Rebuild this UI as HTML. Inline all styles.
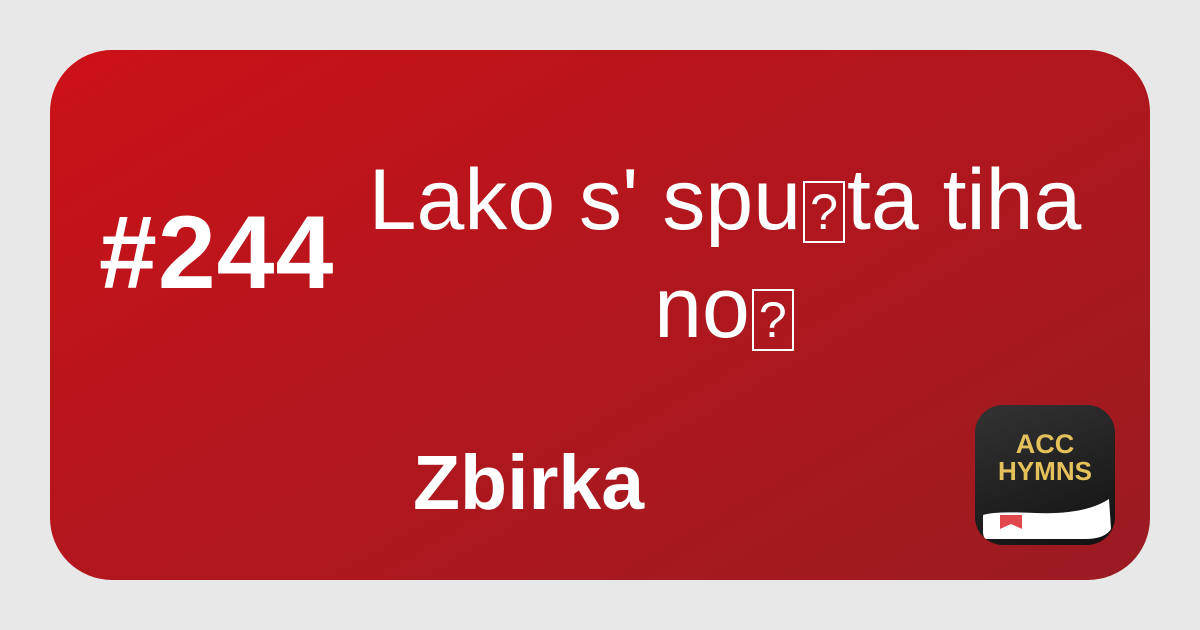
<!DOCTYPE html>
<html><head><style>
body{margin:0;width:1200px;height:630px;background:#e8e8e8;position:relative;overflow:hidden;font-family:"Liberation Sans",sans-serif;}
.card{position:absolute;left:50px;top:50px;width:1100px;height:530px;border-radius:62px;background:linear-gradient(150deg,#cc1118 0%,#b3161d 45%,#9b1b22 100%);}
.t{position:absolute;color:#fff;white-space:nowrap;}
.bx{display:inline-block;border:2px solid #fff;box-sizing:border-box;width:42px;height:62px;font-size:50px;line-height:58px;text-align:center;vertical-align:0;margin:0 2px;}
.logo{position:absolute;left:975px;top:405px;width:140px;height:140px;border-radius:28px;background:linear-gradient(160deg,#333,#111);overflow:hidden;}
.logo .g{position:absolute;width:140px;text-align:center;color:#e4c15b;font-weight:bold;font-size:27px;}
</style></head><body>
<div class="card"></div>
<div class="t" style="left:99px;top:198px;font-size:104px;font-weight:bold;line-height:110px;letter-spacing:1px;">#244</div>
<div class="t" style="left:0;width:1450px;text-align:center;top:152px;font-size:86px;line-height:96px;">Lako s' spu<span class="bx">?</span>ta tiha</div>
<div class="t" style="left:0;width:1450px;text-align:center;top:260px;font-size:86px;line-height:96px;">no<span class="bx">?</span></div>
<div class="t" style="left:413px;top:440px;font-size:77px;font-weight:bold;line-height:86px;">Zbirka</div>
<div class="logo">
<div class="g" style="top:24px;">ACC</div>
<div class="g" style="top:51px;font-size:26px;">HYMNS</div>
<svg width="140" height="140" style="position:absolute;left:0;top:0">
<path d="M8 110 Q20 106 60 108 Q110 110 134 94 L136 124 Q130 134 110 134 L12 134 Q8 134 8 126 Z" fill="#fff"/>
<path d="M25 110 H47 V124 L36 119 L25 124 Z" fill="#e0484e"/>
</svg>
</div>
</body></html>
